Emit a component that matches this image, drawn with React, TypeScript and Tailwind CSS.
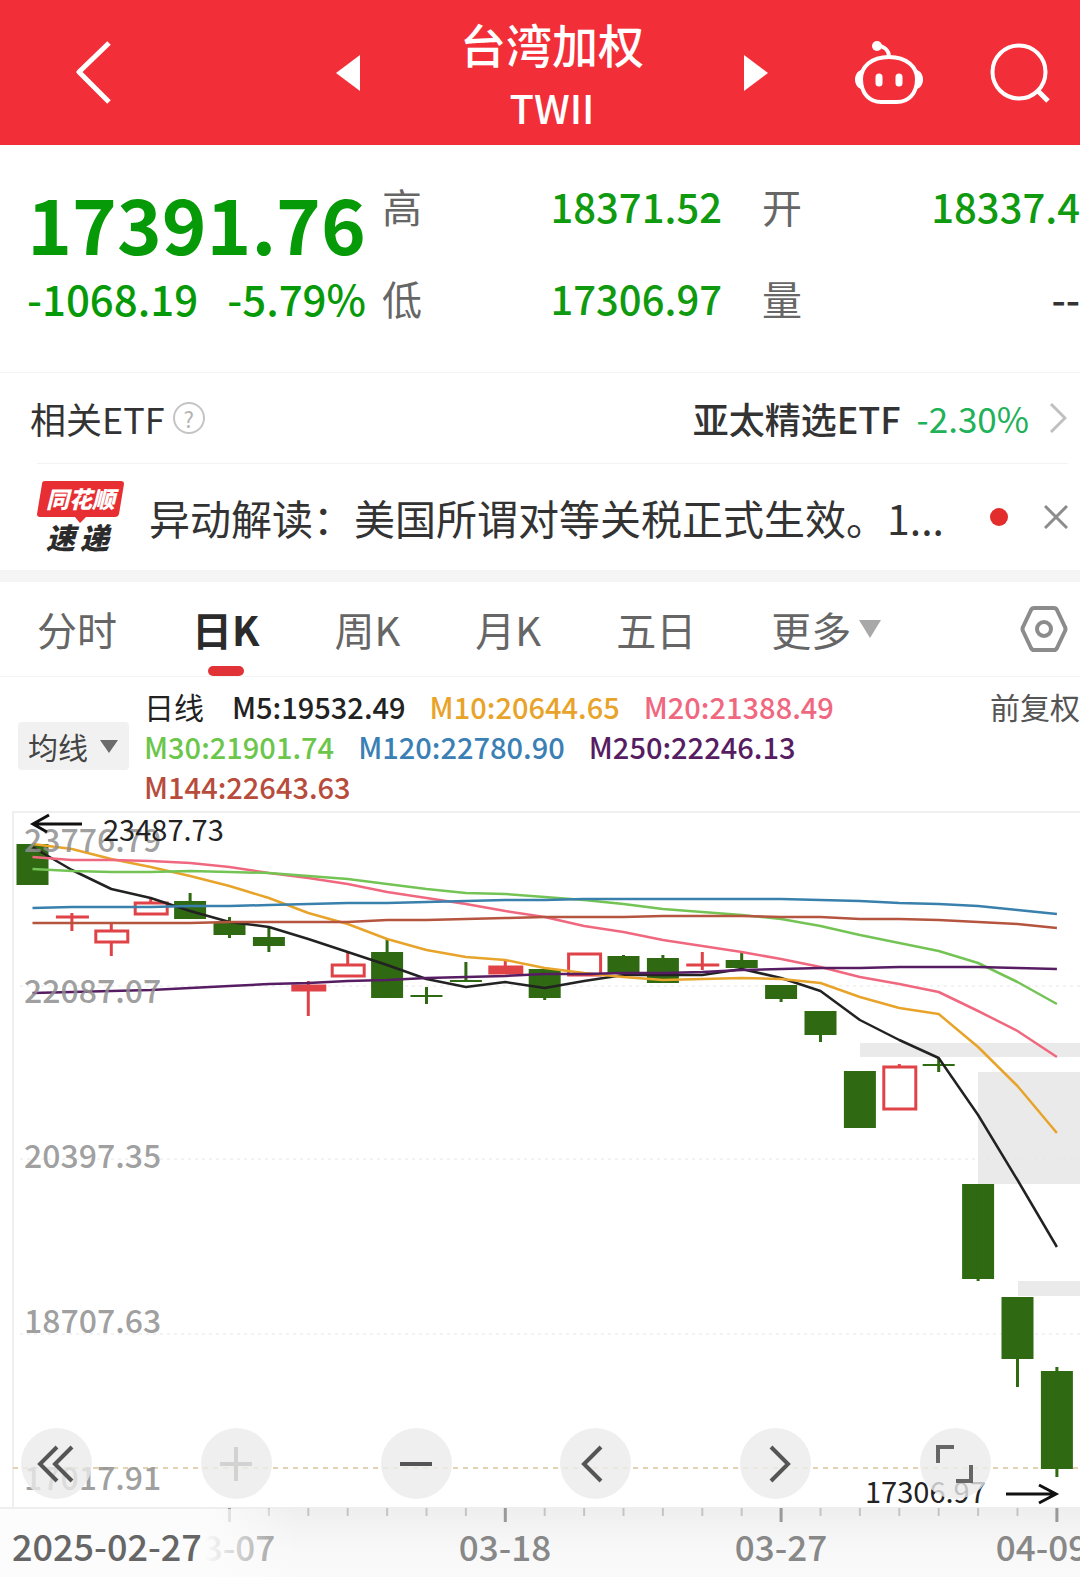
import React from 'react';

const STEP = 39.4;
const FIRST = 32.5;
const xAt = (i: number) => FIRST + i * STEP;

type Candle = {
  kind: 'up' | 'down';
  top: number;
  bottom: number;
  high: number;
  low: number;
};

const c = (kind: 'up' | 'down', top: number, bottom: number, high: number, low: number): Candle => ({
  kind,
  top,
  bottom,
  high,
  low,
});

const candles: Candle[] = [
  c('down', 34, 75, 34, 75),
  c('up', 106, 108, 103, 121),
  c('up', 121, 132, 114, 146),
  c('up', 93, 104, 88, 104),
  c('down', 91, 109, 83, 109),
  c('down', 113, 125, 107, 128),
  c('down', 127, 136, 118, 142),
  c('up', 176, 180, 171, 206),
  c('up', 155, 166, 142, 166),
  c('down', 142, 188, 129, 188),
  c('down', 185, 187, 177, 194),
  c('down', 170, 172, 152, 172),
  c('up', 157, 163, 151, 163),
  c('down', 159, 188, 159, 190),
  c('up', 144, 165, 144, 165),
  c('down', 146, 164, 145, 164),
  c('down', 148, 173, 145, 173),
  c('up', 154, 156, 142, 160),
  c('down', 150, 158, 143, 158),
  c('down', 175, 189, 175, 192),
  c('down', 201, 225, 201, 232),
  c('down', 261, 318, 261, 318),
  c('up', 257, 299, 254, 299),
  c('down', 254, 256, 248, 262),
  c('down', 374, 469, 374, 471),
  c('down', 487, 549, 487, 577),
  c('down', 561, 659, 557, 667),
];

const averages = [
  {
    color: '#222222',
    values: [37, 60, 79, 88, 101, 112, 117, 129, 142, 155, 169, 177, 172, 178, 171, 165, 165, 165, 159, 168, 181, 210, 230, 248, 305, 370, 437],
  },
  {
    color: '#e8a32a',
    values: [34, 39, 49, 57, 66, 76, 88, 103, 114, 129, 140, 147, 150, 158, 163, 167, 170, 169, 168, 169, 173, 187, 198, 204, 237, 276, 323],
  },
  {
    color: '#f0687f',
    values: [47, 50, 50, 51, 53, 57, 63, 68, 74, 82, 88, 94, 101, 107, 116, 122, 130, 136, 142, 149, 157, 167, 174, 182, 201, 221, 247],
  },
  {
    color: '#74c455',
    values: [59, 61, 62, 62, 61, 62, 63, 66, 69, 74, 79, 83, 84, 87, 90, 94, 99, 102, 105, 109, 116, 125, 133, 141, 153, 172, 194],
  },
  {
    color: '#3a80ad',
    values: [98, 97, 97, 97, 96, 96, 95, 94, 93, 93, 92, 91, 90, 90, 89, 89, 89, 89, 89, 89, 90, 91, 93, 94, 96, 100, 104],
  },
  {
    color: '#b5543f',
    values: [113, 113, 113, 113, 113, 112, 112, 112, 112, 110, 110, 109, 108, 107, 107, 107, 106, 106, 106, 107, 107, 109, 109, 110, 112, 114, 118],
  },
  {
    color: '#571d63',
    values: [183, 182, 181, 180, 178, 176, 174, 173, 171, 170, 168, 167, 166, 164, 164, 163, 163, 162, 160, 159, 158, 158, 157, 157, 157, 158, 159],
  },
];

const priceLabels = [
  { text: '23776.79', y: 42 },
  { text: '22087.07', y: 193 },
  { text: '20397.35', y: 358 },
  { text: '18707.63', y: 523 },
  { text: '17017.91', y: 680 },
];

// The last date is pulled left so that most of it stays inside the chart
const dates = [
  { text: '03-07', x: 229 },
  { text: '03-18', x: 505 },
  { text: '03-27', x: 781 },
  { text: '04-09', x: 1042 },
];

const legend = [
  [
    { text: 'M5:19532.49', className: 'text-[#222222]' },
    { text: 'M10:20644.65', className: 'text-[#e8a32a]' },
    { text: 'M20:21388.49', className: 'text-[#f0687f]' },
  ],
  [
    { text: 'M30:21901.74', className: 'text-[#6cc64b]' },
    { text: 'M120:22780.90', className: 'text-[#3a80b5]' },
    { text: 'M250:22246.13', className: 'text-[#571d63]' },
  ],
  [{ text: 'M144:22643.63', className: 'text-[#b84c3c]' }],
];

const Header: React.FC = () => (
  <header className="flex items-center bg-[#f22f39] pl-[76px] pr-[30px] pt-[9px] pb-2 text-white">
    <button aria-label="返回">
      <svg width="36" height="64" viewBox="0 0 36 64" fill="none" stroke="currentColor" strokeWidth="5">
        <path d="M33 2 L3 31 L33 61" strokeLinejoin="round" />
      </svg>
    </button>
    <div className="ml-[224px] mr-[86px] flex flex-1 items-center justify-between">
      <button aria-label="上一个">
        <svg width="24" height="36" viewBox="0 0 24 36" fill="currentColor">
          <path d="M0 18 L24 0 V36 Z" />
        </svg>
      </button>
      <div className="text-center font-medium">
        <h1 className="text-[46px] leading-[68px]">台湾加权</h1>
        <p className="text-[40px] leading-[60px]">TWII</p>
      </div>
      <button aria-label="下一个">
        <svg width="24" height="36" viewBox="0 0 24 36" fill="currentColor">
          <path d="M24 18 L0 0 V36 Z" />
        </svg>
      </button>
    </div>
    <div className="flex items-center gap-[66px]">
      <button aria-label="智能助手">
        <svg width="70" height="66" viewBox="0 0 70 66" fill="none" stroke="currentColor" strokeWidth="4">
          <path d="M35 17 C53 17 63 27 63 39 C63 54 54 62 43 62 H27 C16 62 7 54 7 39 C7 27 17 17 35 17 Z" />
          <path d="M35 17 C35 10 30 6 23 6" />
          <circle cx="23" cy="6" r="5" fill="currentColor" stroke="none" />
          <path d="M7 30 C-1 33 -1 46 7 49 Z M63 30 C71 33 71 46 63 49 Z" fill="currentColor" stroke="none" />
          <path d="M25 37 V43 M45 37 V43" strokeWidth="7" strokeLinecap="round" />
        </svg>
      </button>
      <button aria-label="搜索">
        <svg width="60" height="60" viewBox="0 0 60 60" fill="none" stroke="currentColor" strokeWidth="4">
          <circle cx="29" cy="29" r="26.5" />
          <path d="M47 47 L58 58" strokeWidth="5" />
        </svg>
      </button>
    </div>
  </header>
);

const Stat: React.FC<{ label: string; value: string; className?: string }> = ({
  label,
  value,
  className = 'text-[#0f9a10]',
}) => (
  <div className="flex justify-between text-[40px] leading-[52px]">
    <dt className="text-[#666666]">{label}</dt>
    <dd className={`font-medium ${className}`}>{value}</dd>
  </div>
);

const Quote: React.FC = () => (
  <section className="grid grid-cols-[339px_340px_1fr] border-b border-[#f3f3f3] pt-[35px] pb-12 pl-[27px]">
    <div className="font-medium text-[#079a08]">
      <p className="text-center text-[76px] leading-[84px] pb-2 font-bold">17391.76</p>
      <p className="flex justify-between text-[42px] leading-[52px]">
        <span>-1068.19</span>
        <span>-5.79%</span>
      </p>
    </div>
    <dl className="ml-4 -mr-4 grid gap-10">
      <Stat label="高" value="18371.52" />
      <Stat label="低" value="17306.97" />
    </dl>
    <dl className="ml-14 grid gap-10">
      <Stat label="开" value="18337.4" />
      <Stat label="量" value="--" className="text-[#333333]" />
    </dl>
  </section>
);

const RelatedEtf: React.FC = () => (
  <section className="flex items-center pl-[30px] pr-[13px] py-[19px] text-4xl leading-[52px] text-[#333333]">
    <span>相关ETF</span>
    <button
      aria-label="说明"
      className="ml-2 flex size-8 items-center justify-center rounded-full border-2 border-[#c4c4c4] text-[22px] leading-none text-[#b4b4b4]"
    >
      ?
    </button>
    <a href="#etf" className="ml-auto flex items-center">
      <span className="font-medium">亚太精选ETF</span>
      <span className="ml-4 text-[35px] text-[#20b159]">-2.30%</span>
      <svg className="ml-5" width="18" height="32" viewBox="0 0 18 32" fill="none" stroke="#c0c0c0" strokeWidth="3">
        <path d="M2 2 L16 16 L2 30" />
      </svg>
    </a>
  </section>
);

const NewsLogo: React.FC = () => (
  <svg className="shrink-0" width="88" height="72" viewBox="0 0 88 72">
    <path
      d="M8 0 H84 Q87 0 87 3 L82 33 Q81 36 78 36 H49 L43 42 L38 36 H3 Q0 36 0 33 L5 3 Q5 0 8 0 Z"
      fill="#e62e33"
    />
    <g fontStyle="italic" fontWeight="900">
      <text x="9" y="27" fontSize="23" fill="#ffffff">同花顺</text>
      <text x="9" y="68" fontSize="29" fill="#2b2b2b">速</text>
      <text x="43" y="68" fontSize="29" fill="#2b2b2b">递</text>
    </g>
  </svg>
);

const News: React.FC = () => (
  <section className="ml-[37px] mr-3 flex items-center border-t border-[#f3f3f3] py-[17px]">
    <NewsLogo />
    <a href="#news" className="ml-6 whitespace-nowrap text-[41px] leading-[60px] text-[#333333]">
      异动解读：美国所谓对等关税正式生效。1...
    </a>
    <span className="ml-auto size-[18px] rounded-full bg-[#e32c2c]" />
    <button aria-label="关闭" className="ml-9">
      <svg width="24" height="24" viewBox="0 0 24 24" stroke="#8c8c8c" strokeWidth="3">
        <path d="M1 1 L23 23 M23 1 L1 23" />
      </svg>
    </button>
  </section>
);

const Tabs: React.FC = () => (
  <nav className="flex items-center gap-[75px] border-t-[12px] border-b border-t-[#f5f5f5] border-b-[#f3f3f3] pl-[37px] pr-3 text-[40px] leading-[94px] text-[#666666]">
    <button>分时</button>
    <button className="relative font-bold text-[#2b2b2b]">
      日K
      <span className="absolute bottom-0 left-1/2 h-[10px] w-9 -translate-x-1/2 rounded-full bg-[#e13337]" />
    </button>
    <button>周K</button>
    <button>月K</button>
    <button>五日</button>
    <button className="flex items-center gap-2">
      更多
      <svg width="22" height="18" viewBox="0 0 22 18" fill="#a8a8a8">
        <path d="M0 0 H22 L11 18 Z" />
      </svg>
    </button>
    <button aria-label="设置" className="ml-auto">
      <svg width="48" height="46" viewBox="0 0 48 46" fill="none" stroke="#8c8c8c" strokeWidth="4">
        <path d="M14 2 H34 Q36 2 37 4 L45 21 Q46 23 45 25 L37 42 Q36 44 34 44 H14 Q12 44 11 42 L3 25 Q2 23 3 21 L11 4 Q12 2 14 2 Z" />
        <circle cx="24" cy="23" r="7" />
      </svg>
    </button>
  </nav>
);

const Legend: React.FC = () => (
  <section className="flex items-center pt-[9px] pb-1 pl-[18px] text-[30px] leading-10 whitespace-nowrap">
    <div className="relative">
      <select
        aria-label="指标"
        className="block w-[111px] appearance-none rounded bg-[#f1f1f1] py-1 pl-[10px] text-[#444444]"
      >
        <option>均线</option>
      </select>
      <svg
        className="pointer-events-none absolute top-[18px] right-[11px]"
        width="18"
        height="13"
        viewBox="0 0 18 13"
        fill="#6b6b6b"
      >
        <path d="M0 0 H18 L9 13 Z" />
      </svg>
    </div>
    <div className="ml-[15px] flex-1 text-[29px] font-medium">
      {legend.map((row, i) => (
        <div key={i} className="flex gap-6">
          {i === 0 && <span className="mr-1 text-[30px] font-normal text-[#222222]">日线</span>}
          {row.map((item) => (
            <span key={item.text} className={item.className}>
              {item.text}
            </span>
          ))}
        </div>
      ))}
    </div>
    <button className="self-start text-[#555555]">前复权</button>
  </section>
);

const CandleShape: React.FC<{ candle: Candle; x: number }> = ({ candle, x }) => {
  const { kind, top, bottom, high, low } = candle;
  if (kind === 'down') {
    return (
      <g fill="#2f6912">
        <rect x={x - 16} y={top} width="32" height={bottom - top} />
        <rect x={x - 1.5} y={high} width="3" height={low - high} />
      </g>
    );
  }
  return (
    <g stroke="#e04347" strokeWidth="3">
      <path d={`M${x} ${high} V${top} M${x} ${bottom} V${low}`} />
      <rect
        x={x - 15.5}
        y={top}
        width="32"
        height={bottom - top}
        fill={bottom - top < 7 ? '#e04347' : '#ffffff'}
        strokeWidth={bottom - top < 3 ? 1 : 3}
      />
    </g>
  );
};

const Chart: React.FC = () => (
  <svg className="block w-full" viewBox="0 0 1080 767">
    <defs>
      <linearGradient id="axis" x1="0" y1="0" x2="0" y2="1">
        <stop offset="0" stopColor="#eeeeee" />
        <stop offset="0.6" stopColor="#f8f8f8" />
        <stop offset="1" stopColor="#fafafa" />
      </linearGradient>
      <linearGradient id="fade" x1="0" y1="0" x2="1" y2="0">
        <stop offset="0" stopColor="#fcfcfc" />
        <stop offset="0.68" stopColor="#fcfcfc" />
        <stop offset="1" stopColor="#fcfcfc" stopOpacity="0" />
      </linearGradient>
    </defs>

    {/* Gaps */}
    <g fill="#eaeaea">
      <rect x="860" y="233" width="220" height="14" />
      <rect x="978" y="262" width="102" height="112" />
      <rect x="1018" y="471" width="62" height="15" />
    </g>

    {/* Grid */}
    <g fill="none" stroke="#e6e6e6" strokeWidth="2">
      <path d="M1080 2 H13 V697" stroke="#efefef" />
      <path d="M20 176 H1080 M20 349 H1080 M20 524 H1080" strokeWidth="1" strokeDasharray="3 4" />
      <path d="M13 658 H1080" stroke="#e3d2b4" strokeDasharray="5 5" />
    </g>

    {candles.map((candle, i) => (
      <CandleShape key={i} candle={candle} x={xAt(i)} />
    ))}

    {averages.map((line) => (
      <polyline
        key={line.color}
        points={line.values.map((y, i) => `${xAt(i)},${y}`).join(' ')}
        fill="none"
        stroke={line.color}
        strokeWidth="2.5"
        strokeLinejoin="round"
      />
    ))}

    <g fontSize="32" fontWeight="500" fill="#8f8f8f" fillOpacity="0.85">
      {priceLabels.map((label) => (
        <text key={label.text} x="24" y={label.y}>
          {label.text}
        </text>
      ))}
    </g>

    {/* High and low markers */}
    <g fontSize="29" fill="#222222">
      <text x="103" y="31">23487.73</text>
      <text x="865" y="693">17306.97</text>
    </g>
    <g fill="none" stroke="#111111" strokeWidth="3">
      <path d="M82 14 H33 M49 5 L33 14 L47 22" />
      <path d="M1006 684 H1056 M1039 675 L1056 684 L1039 693" />
    </g>

    {/* Date axis */}
    <rect x="0" y="697" width="1080" height="70" fill="url(#axis)" />
    {candles.map((_, i) =>
      i < 5 ? null : (
        <path
          key={i}
          d={`M${xAt(i)} 698 V${i % 7 === 5 ? 712 : 706}`}
          stroke={i % 7 === 5 ? '#999999' : '#c4c4c4'}
          strokeWidth={i % 7 === 5 ? 3 : 2}
        />
      ),
    )}
    <g fontSize="35" textAnchor="middle" fontWeight="500" fill="#888888">
      {dates.map((date) => (
        <text key={date.text} x={date.x} y="751">
          {date.text}
        </text>
      ))}
    </g>
    <rect x="0" y="699" width="300" height="68" fill="url(#fade)" />
    <text x="12" y="751" fontSize="36" fontWeight="500" fill="#666666">
      2025-02-27
    </text>
  </svg>
);

const tools = [
  { label: '展开', color: '#555555', path: 'M20 3 L3 20 L20 37 M35 3 L18 20 L35 37' },
  { label: '放大', color: '#d2d2d2', path: 'M20 3 V37 M4 20 H36' },
  { label: '缩小', color: '#555555', path: 'M4 20 H36' },
  { label: '左移', color: '#555555', path: 'M25 3 L8 20 L25 37' },
  { label: '右移', color: '#555555', path: 'M15 3 L32 20 L15 37' },
  { label: '全屏', color: '#666666', path: 'M3 19 V3 H19 M36 21 V37 H21' },
];

const Toolbar: React.FC = () => (
  <div className="absolute right-[89px] bottom-[78px] left-[21px] flex justify-between">
    {tools.map((tool) => (
      <button
        key={tool.label}
        aria-label={tool.label}
        className="flex size-[71px] items-center justify-center rounded-full bg-[#ebebeb]/80"
      >
        <svg width="40" height="40" viewBox="0 0 40 40" fill="none" stroke={tool.color} strokeWidth="4">
          <path d={tool.path} />
        </svg>
      </button>
    ))}
  </div>
);

const App: React.FC = () => {
  return (
    <main className="overflow-hidden bg-white font-['Noto_Sans_CJK_SC',sans-serif]">
      <Header />
      <Quote />
      <RelatedEtf />
      <News />
      <Tabs />
      <Legend />
      <div className="relative">
        <Chart />
        <Toolbar />
      </div>
    </main>
  );
};

export default App;
